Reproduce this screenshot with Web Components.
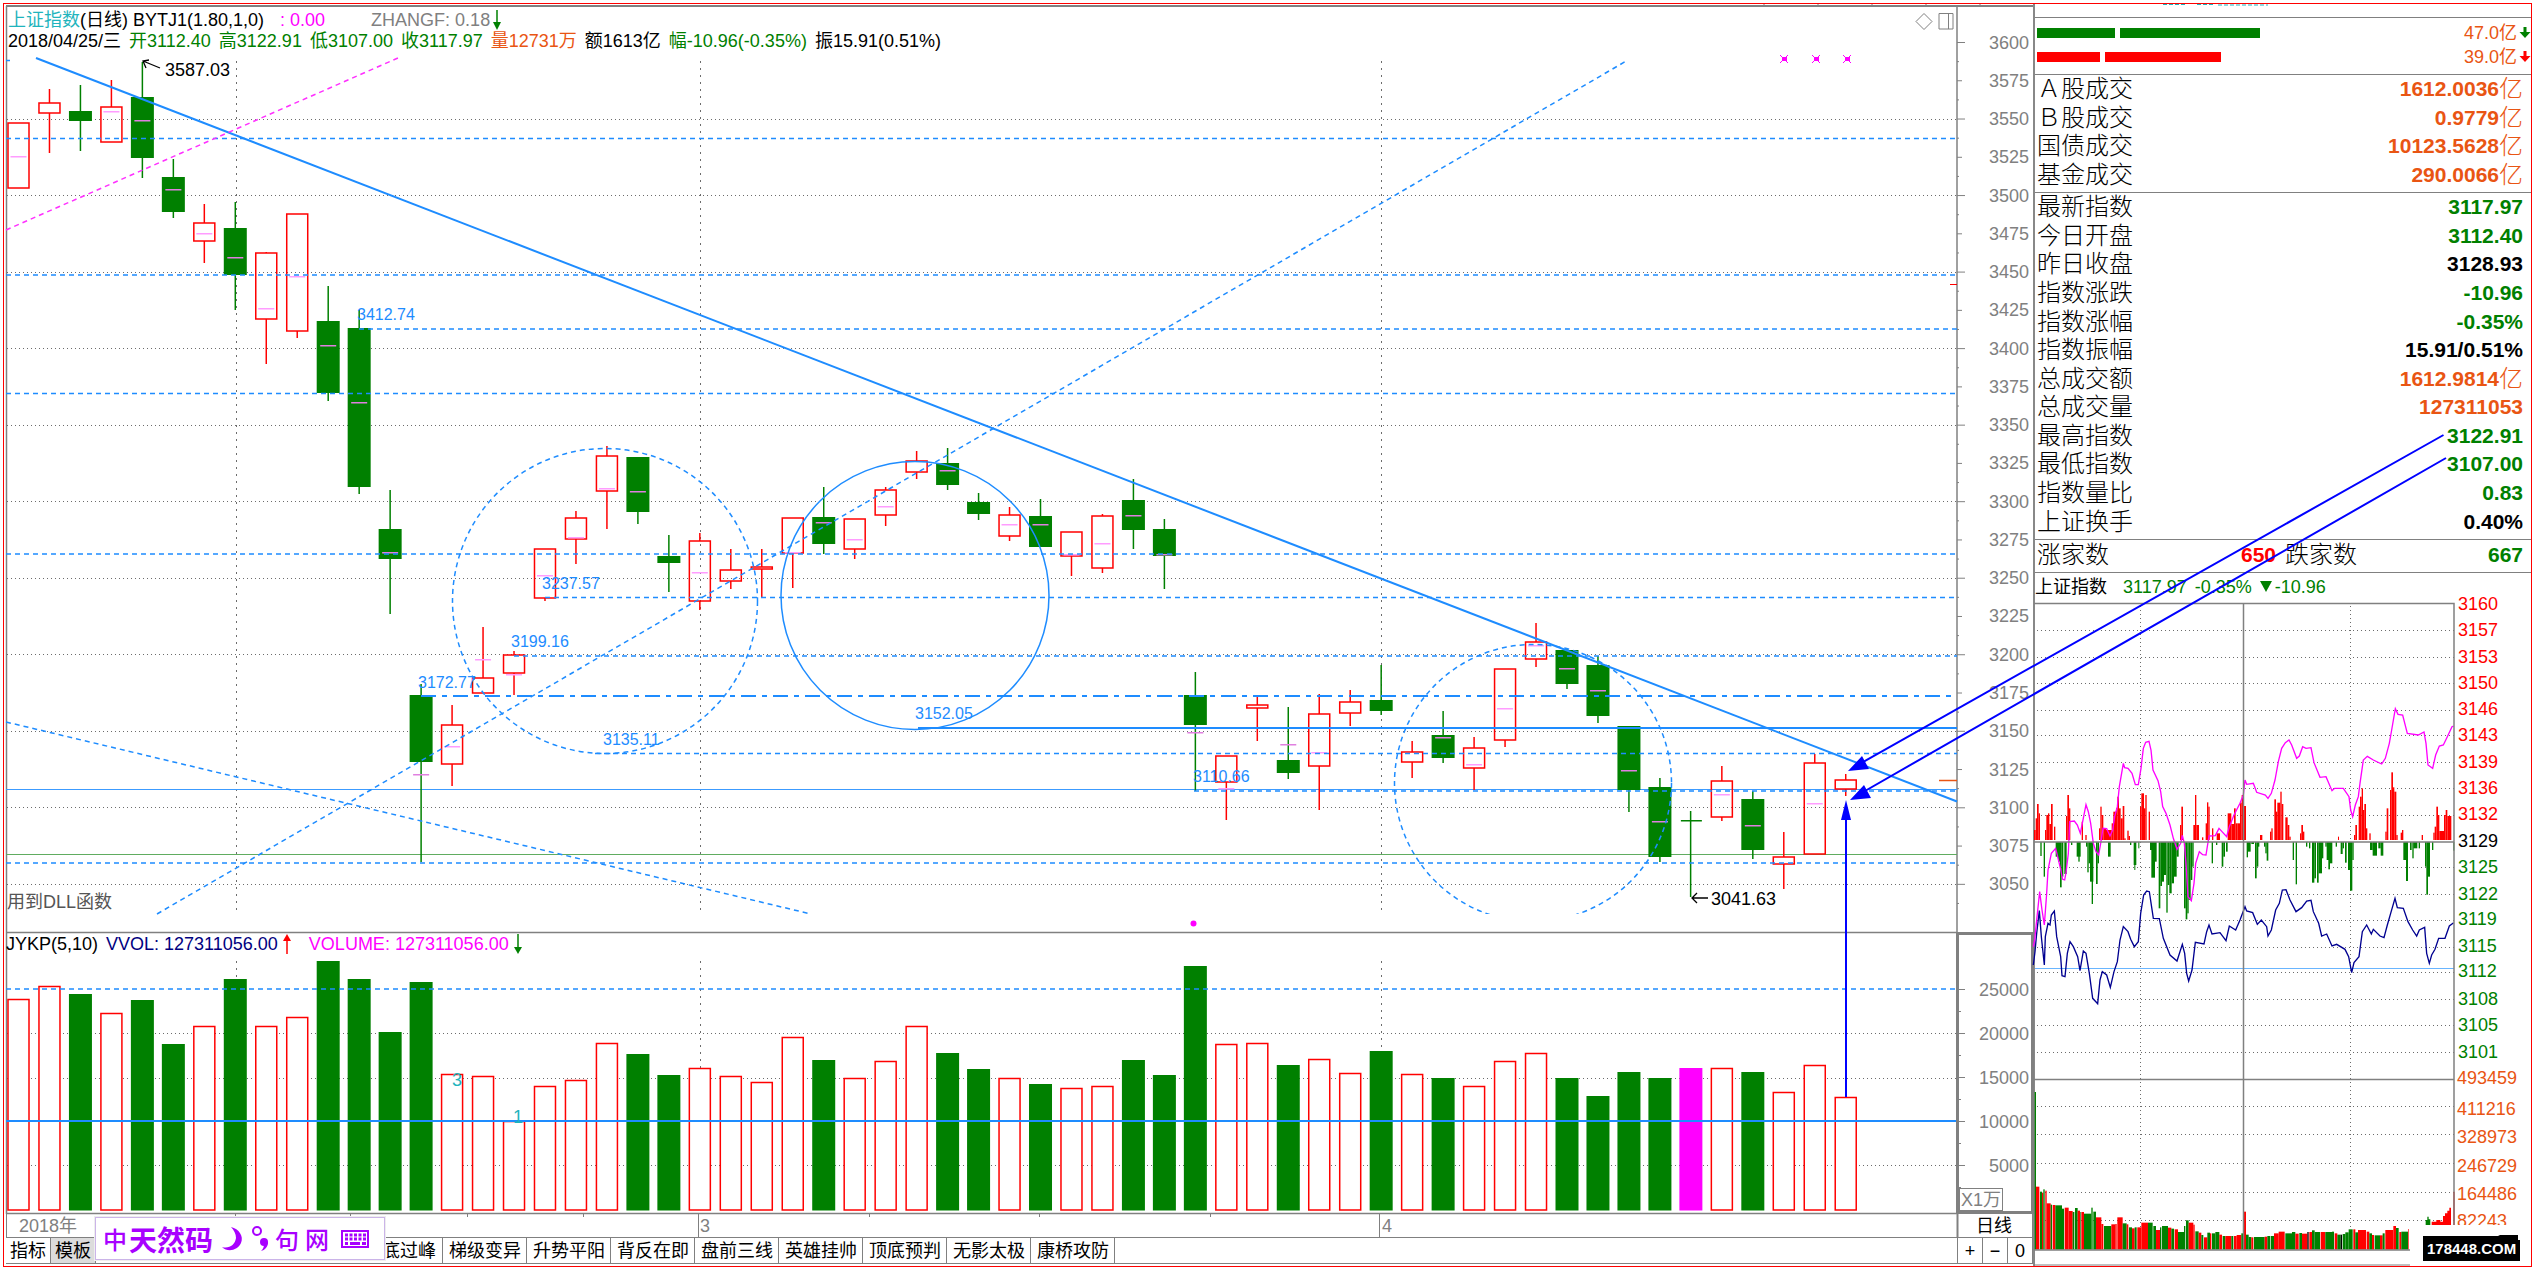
<!DOCTYPE html>
<html lang="zh-CN">
<head>
<meta charset="utf-8">
<title>上证指数(日线)</title>
<style>
  html, body { margin: 0; background: #fff; }
  body { font: 18px/20px "Liberation Sans", "Noto Sans CJK SC", sans-serif; color: #000; }
</style>
</head>
<body>
<market-app></market-app>
<script>
const FONT = '"Liberation Sans","Noto Sans CJK SC",sans-serif';
const BLUE = '#1e8cff', GREEN = '#008000', GRAY = '#808080';
const SVG_CSS = `
  :host{display:block;position:relative}
  svg{display:block;width:100%;height:auto;overflow:visible}
  svg text{font:18px ${FONT};white-space:pre}
  .g{stroke:${GRAY};fill:none}
  .dot{stroke:#6c6c6c;stroke-dasharray:1 3;fill:none;shape-rendering:crispEdges}
  .b{stroke:${BLUE};stroke-width:1.5;fill:none}
  .d{stroke-dasharray:5 4}`;
const line = (x1, y1, x2, y2, cls, extra = '') => `<line x1="${x1}" y1="${y1}" x2="${x2}" y2="${y2}" class="${cls}" ${extra}/>`;
const text = (x, y, s, fill, extra = '') => `<text x="${x}" y="${y}" fill="${fill}" ${extra}>${s}</text>`;
const barX = i => 18.5 + 30.97 * i;
const PLOT_RIGHT = 1957;

function define(name, build) {
  customElements.define(name, class extends HTMLElement {
    connectedCallback() {
      if (this.shadowRoot) return;
      this.attachShadow({ mode: 'open' }).innerHTML = build(this);
    }
  });
}

/* colour, high, body top, body bottom, low, mean mark */
const CANDLES = [
 ['r',123,123,188,188,156],['r',89,103,113,153],['g',85,111,121,151],['r',80,107,142,142,111],['g',62,97,158,178,120],
 ['g',159,177,212,218,189],['r',204,223,241,263,233],['g',202,228,275,310,257],['r',252,253,319,364,308],['r',214,214,331,338,276],
 ['g',286,321,393,401,345],['g',310,328,487,494,402],['g',490,529,559,614,552],['g',684,695,762,862,774],['r',705,725,764,786,746],
 ['r',627,678,693,693,659],['r',651,655,673,695,674],['r',549,549,598,601,575],['r',511,518,539,564,537],['r',446,456,491,529,488],
 ['g',457,457,512,524,491],['g',535,556,563,592],['r',533,541,601,610,572],['r',549,570,581,589],['r',549,567,569,597],
 ['r',518,518,553,588,552],['g',487,517,544,554,522],['r',519,519,549,559,539],['r',487,490,515,526,506],['r',451,461,472,479],
 ['g',448,463,485,490,470],['g',493,502,514,520],['r',507,515,536,541,524],['g',499,516,547,547,524],['r',532,532,556,576,554],
 ['r',514,516,568,573,543],['g',479,500,530,549,515],['g',519,529,556,589,554],['g',672,695,725,791,732],['r',756,756,782,820,788],
 ['r',697,705,708,741],['g',707,760,773,779,744],['r',694,714,766,810,752],['r',690,702,713,726],['g',665,700,711,715],
 ['r',741,752,762,778],['g',711,735,758,763,737],['r',737,748,768,790,764],['r',669,669,740,747,708],['r',623,642,659,667,645],
 ['g',648,650,684,689,668],['g',656,665,716,723,690],['g',726,726,790,812,770],['g',778,787,857,862,821],['g',811,820,822,897],
 ['r',766,781,817,821,794],['g',791,799,850,859,825],['r',832,857,864,889],['r',754,763,854,854,803],['r',774,780,789,796]];
const VOLUMES = [999,986,994,1013,1000,1044,1026,979,1026,1017,961,979,1032,982,1074,1076,1121,1086,1080,1043,1054,1075,1068,1076,1082,1037,1060,1078,1061,1026,
 1053,1069,1078,1084,1088,1086,1060,1075,966,1044,1043,1065,1059,1073,1051,1074,1078,1086,1061,1053,1078,1096,1072,1078,1068,1068,1072,1092,1065,1097];

function candle([c, hi, top, bot, lo, mark], i) {
  const x = barX(i), color = c === 'r' ? '#f00' : GREEN;
  let s = '';
  if (i === 54) s += `<rect x="${x - 10}" y="820" width="21" height="1.5" fill="${color}"/><rect x="${x - 1}" y="${hi}" width="1.5" height="${lo - hi}" fill="${color}"/>`;
  else {
    if (top > hi) s += line(x, hi, x, top, '', `stroke="${color}" stroke-width="1.5"`);
    if (lo > bot) s += line(x, bot, x, lo, '', `stroke="${color}" stroke-width="1.5"`);
    s += c === 'r'
      ? `<rect x="${x - 10.5}" y="${top}" width="21" height="${bot - top}" fill="none" stroke="${color}" stroke-width="1.5"/>`
      : `<rect x="${x - 11.5}" y="${top}" width="23" height="${bot - top}" fill="${color}"/>`;
  }
  if (mark) s += `<rect x="${x - 8}" y="${mark}" width="16" height="1.5" fill="${c === 'r' ? '#ff9cff' : '#e080e0'}"/>`;
  return s;
}

define('price-chart', () => {
  let s = '';
  s += line(6, 6, 2033, 6, 'g', 'stroke-width="2"') + line(PLOT_RIGHT, 6, PLOT_RIGHT, 932, 'g', 'stroke-width="1.5"') + line(6.5, 6, 6.5, 932, 'g', 'stroke-width="1.5"');
  for (let x = 1764; x < 2030; x += 54) s += line(x, 4, x, 6, 'g');
  for (let p = 3550; p >= 3050; p -= 50) { const y = Math.round(42 + (3600 - p) * 1.5306); s += line(7, y + .5, PLOT_RIGHT, y + .5, 'dot'); }
  for (const x of [236, 700, 1381]) s += line(x + .5, 61, x + .5, 912, 'dot', 'style="stroke-dasharray:2 5"');
  for (let k = 0; k < 46; k++) { const y = 42.5 + k * 19.1325; s += line(PLOT_RIGHT, y, PLOT_RIGHT + (k % 4 === 0 ? 8 : k % 2 === 0 ? 5 : 2), y, 'g'); }
  for (let p = 3600; p >= 3050; p -= 25) s += text(2029, Math.round(48.5 + (3600 - p) * 1.5306), p, GRAY, 'text-anchor="end"');
  s += line(6, 789.5, PLOT_RIGHT, 789.5, '', 'stroke="#3c9bff"') + line(6, 854.5, PLOT_RIGHT, 854.5, '', 'stroke="#60ac60"');
  CANDLES.forEach((c, i) => s += candle(c, i));
  for (const [x, y] of [[6, 138.5], [6, 275], [359, 329], [6, 393.5], [6, 554], [545, 597.5], [514, 656], [595, 753.5], [1194, 791], [6, 863]]) s += line(x, y, PLOT_RIGHT, y, 'b d');
  s += line(421, 696, PLOT_RIGHT, 696, 'b', 'style="stroke-width:2;stroke-dasharray:15 6 5 6"') + line(918, 728, PLOT_RIGHT, 728, 'b', 'style="stroke-width:2"');
  s += '<circle cx="605" cy="601" r="152.5" class="b d"/><circle cx="915" cy="595.5" r="134" class="b"/>';
  s += '<clipPath id="c"><rect x="6" y="58" width="1951" height="856"/></clipPath><circle cx="1533" cy="783" r="138.5" class="b d" clip-path="url(#c)"/>';
  s += line(36, 58, PLOT_RIGHT, 801.5, 'b', 'style="stroke-width:2"') + line(157, 914, 1628, 60, 'b d') + line(6, 722, 811, 914, 'b d') + line(6, 60.5, 10, 60.5, 'b');
  s += line(6, 230, 398, 58, 'd', 'stroke="#ff30ff" stroke-width="1.5"');
  for (const [x, y, t] of [[357, 320, '3412.74'], [542, 589, '3237.57'], [511, 647, '3199.16'], [418, 688, '3172.77'], [603, 745, '3135.11'], [915, 719, '3152.05'], [1193, 782, '3110.66']]) s += text(x, y, t, BLUE, 'style="font-size:16px"');
  s += text(165, 76, '3587.03', '#000') + text(1711, 905, '3041.63', '#000') + text(7, 908, '用到DLL函数', '#555');
  s += '<path d="M160 68 L143 61 M149 60 L143 61 L146 68 M1708 898 H1692 M1697 893 L1692 898 L1697 903" stroke="#000" fill="none" stroke-width="1.3"/>';
  for (const x of [1784, 1816, 1847]) s += `<path d="M${x - 4} 55 l8 8 m0 -8 l-8 8" stroke="#f0f"/><rect x="${x - 2}" y="57" width="5" height="4" fill="#f0f"/>`;
  s += '<circle cx="1193.5" cy="923.5" r="3" fill="#f0f"/>';
  s += line(1939, 780.5, PLOT_RIGHT, 780.5, '', 'stroke="#e95513" stroke-width="1.5"') + line(1950, 284.5, PLOT_RIGHT, 284.5, '', 'stroke="#f00"');
  s += '<path d="M1924 13.5 l8 8 -8 8 -8 -8z M1939 13.5 h14 v15.5 h-14z M1948.5 13.5 v15.5" class="g"/>';
  return `<style>${SVG_CSS}
    .head{position:absolute;left:4px;top:6px;white-space:nowrap}
    .row{display:flex;gap:8px;height:21px;line-height:21px}
    .green{color:${GREEN}} .orange{color:#e95513} .gray{color:${GRAY}}
    .row svg{width:8px;height:21px}
    .cyan{color:#1fb4bd} .first{gap:0} .mag{color:#f0f;margin:0 46px 0 16px} .code{margin-left:5px} .gray{margin-right:3px}
  </style>
  <svg viewBox="4 4 2029 928">${s}</svg>
  <div class="head">
    <div class="row first"><span class="cyan">上证指数</span><span>(日线)</span><span class="code">BYTJ1(1.80,1,0)</span><span class="mag">: 0.00</span><span class="gray">ZHANGF: 0.18</span><svg viewBox="0 0 8 21"><path d="M4 0V16" stroke="${GREEN}" stroke-width="1.5"/><path d="M0 12h8L4 20z" fill="${GREEN}"/></svg></div>
    <div class="row"><span>2018/04/25/三</span><span class="green">开3112.40</span><span class="green">高3122.91</span><span class="green">低3107.00</span><span class="green">收3117.97</span><span class="orange">量12731万</span><span>额1613亿</span><span class="green">幅-10.96(-0.35%)</span><span>振15.91(0.51%)</span></div>
  </div>`;
});

define('volume-chart', () => {
  let s = line(6, 932.5, PLOT_RIGHT, 932.5, 'g', 'stroke-width="1.5"') + line(6.5, 932, 6.5, 1214, 'g', 'stroke-width="1.5"') + line(6, 1213.5, PLOT_RIGHT, 1213.5, 'g', 'stroke-width="1.5"');
  for (const y of [1033, 1078, 1165]) s += line(7, y + .5, PLOT_RIGHT, y + .5, 'dot');
  for (const x of [236, 700, 1381]) s += line(x + .5, 961, x + .5, 1210, 'dot', 'style="stroke-dasharray:2 5"');
  VOLUMES.forEach((y, i) => {
    const x = barX(i), c = CANDLES[i][0];
    s += i === 54 || c === 'g'
      ? `<rect x="${x - 11.5}" y="${y}" width="23" height="${1210.5 - y}" fill="${i === 54 ? '#f0f' : GREEN}"/>`
      : `<rect x="${x - 10.5}" y="${y + .5}" width="21" height="${1209.5 - y}" fill="#fff" stroke="#f00" stroke-width="1.5"/>`;
  });
  s += line(6, 989, PLOT_RIGHT, 989, 'b d') + line(6, 1121, PLOT_RIGHT, 1121, 'b', 'style="stroke-width:2"');
  s += '<rect x="1957.5" y="933.5" width="75" height="279" class="g" style="stroke-width:3"/>';
  [[989, '25000'], [1033, '20000'], [1077, '15000'], [1121, '10000'], [1165, '5000']].forEach(([y, t]) => {
    s += line(PLOT_RIGHT, y + .5, PLOT_RIGHT + 8, y + .5, 'g') + line(PLOT_RIGHT, y + 22.5, PLOT_RIGHT + 4, y + 22.5, 'g') + text(2029, y + 7, t, GRAY, 'text-anchor="end"');
  });
  s += '<rect x="1959.5" y="1188.5" width="43" height="22" class="g" style="fill:#fff"/>' + text(1961, 1206, 'X1万', GRAY);
  s += text(452, 1086, '3', '#1fb4bd') + text(513, 1123, '1', '#1fb4bd');
  return `<style>${SVG_CSS}
    .head{position:absolute;left:2px;top:2px;display:flex;height:20px;line-height:20px;white-space:pre}
    .head svg{width:8px;height:20px} .navy{color:#000080;margin:0 5px 0 8px} .mag{color:#f0f;margin:0 5px 0 18px}
  </style>
  <svg viewBox="4 932 2029 282">${s}</svg>
  <div class="head"><span>JYKP(5,10)</span><span class="navy">VVOL: 127311056.00</span><svg viewBox="0 0 8 20"><path d="M4 3V20" stroke="#f00" stroke-width="1.5"/><path d="M0 7h8L4 0z" fill="#f00"/></svg><span class="mag">VOLUME: 127311056.00</span><svg viewBox="0 0 8 20"><path d="M4 0V16" stroke="${GREEN}" stroke-width="1.5"/><path d="M0 13h8L4 20z" fill="${GREEN}"/></svg></div>`;
});

define('time-axis', () => {
  let s = line(6.5, 1214, 6.5, 1238, 'g') + line(1957.5, 1214, 1957.5, 1238, 'g', 'stroke-width="2"') + line(2032.5, 1214, 2032.5, 1238, 'g') + line(6, 1237.5, 2033, 1237.5, 'g');
  for (const x of [235, 350, 467, 583, 869, 1039, 1210]) s += line(x + .5, 1214, x + .5, 1217, 'g');
  for (const x of [698, 1379]) s += line(x + .5, 1214, x + .5, 1237, 'g');
  s += text(19, 1232, '2018年', GRAY) + text(700, 1232, '3', GRAY) + text(1382, 1232, '4', GRAY) + text(1976, 1232, '日线', '#000');
  return `<style>${SVG_CSS}</style><svg viewBox="4 1214 2029 24">${s}</svg>`;
});

define('tab-bar', () => `<style>
    :host{display:flex;height:28px;padding-left:2px;box-sizing:border-box}
    button{font:18px/24px ${FONT};height:26px;padding:0 6px;margin:0;border:0 solid #808080;border-width:0 1px 1px 0;background:#fff;color:#000;white-space:nowrap;box-sizing:border-box;text-align:right}
    .short{width:45px;padding:0 4px} .on{background:#dcdcdc} .tab{width:84px}
    .under{width:263px;height:26px;border-bottom:1px solid #808080;box-sizing:border-box}
    .rest{flex:1;height:26px;border-bottom:1px solid #808080;box-sizing:border-box}
    .zoom{width:25px;padding:0;text-align:center}
    .edge{border-left-width:1px;width:26px}
  </style>
  <button class="short">指标</button><button class="short on">模板</button><span class="under"></span>
  ${['底过峰', '梯级变异', '升势平阳', '背反在即', '盘前三线', '英雄挂帅', '顶底预判', '无影太极', '康桥攻防'].map(t => `<button class="tab">${t}</button>`).join('')}
  <span class="rest"></span><button class="zoom edge">+</button><button class="zoom">−</button><button class="zoom">0</button>`);

define('ime-bar', () => `<style>
    :host{display:flex;align-items:center;gap:6px;width:290px;height:43px;padding-left:7px;box-sizing:border-box;background:#fff;border:1px solid #cbb4e8;outline:1px solid #eee;color:#a800ff;font:24px/30px "Noto Sans CJK SC",sans-serif;white-space:nowrap}
    b{font-size:28px;font-weight:700;margin-left:-4px} svg{display:block}
    span{font-weight:500} .kb{margin-left:5px}
  </style>
  <span>中</span><b>天然码</b>
  <svg width="26" height="30" viewBox="0 0 26 30"><path d="M12 3C20 5 25 12 22 19C19 26 9 29 3 23C10 25 16 21 17 14C17 10 15 6 12 3Z" fill="#a800ff"/></svg>
  <svg width="18" height="30" viewBox="0 0 18 30"><circle cx="6" cy="7" r="4" fill="none" stroke="#a800ff" stroke-width="2"/><circle cx="13" cy="18" r="4" fill="#a800ff"/><path d="M17 18C17 23 14 26 10 27C13 24 13 22 13 18Z" fill="#a800ff"/></svg>
  <span>句</span><span>网</span>
  <svg class="kb" width="30" height="22" viewBox="0 0 30 22"><path d="M2 3h26v16h-26z" fill="#fff" stroke="#a800ff" stroke-width="2"/><path d="M5 7h21M5 11h21" stroke="#a800ff" stroke-width="3" stroke-dasharray="3 1.5"/><path d="M5 15.5h3M10 15.5h10M22 15.5h4" stroke="#a800ff" stroke-width="3"/></svg>`);

define('quote-row', el => {
  const c = { g: GREEN, k: '#000', o: '#e95513', r: '#f00' }[el.getAttribute('tone')];
  return `<style>
    :host{display:flex;justify-content:space-between;align-items:center;flex:1;min-height:0;white-space:nowrap}
    .l{font:24px/28px ${FONT}; font-weight:300}
    b{font:bold 21px/28px ${FONT};color:${c};display:flex;align-items:center}
    i{font:300 24px/28px ${FONT}}
  </style><span class="l"><slot></slot></span><b>${el.getAttribute('value')}${el.hasAttribute('yi') ? '<i>亿</i>' : ''}</b>`;
});

const MAG = '10,800 14,780 20,720 29,635 36,690 43,735 50,640 54,570 64,520 77,505 83,530 90,560 98,598 104,600 108,578 115,520 119,425 133,423 142,435 151,460 158,425 168,374 175,395 182,430 190,490 198,515 206,525 212,490 219,445 230,446 240,468 248,450 254,410 262,380 268,320 280,250 284,263 294,265 306,280 316,314 325,314 333,265 340,205 347,187 357,184 363,210 369,270 384,302 392,335 398,380 408,400 420,435 430,475 441,508 452,490 457,466 463,490 468,550 474,650 484,662 492,610 497,550 508,515 518,524 528,525 537,468 556,467 567,445 576,455 590,470 598,440 612,405 630,370 640,345 645,300 650,313 670,310 680,337 706,345 714,355 724,340 735,300 745,245 755,205 766,188 777,180 785,195 800,235 808,228 818,200 828,205 843,203 852,248 870,292 888,290 906,332 914,325 940,325 957,350 962,390 968,410 976,375 985,350 990,310 1000,240 1012,229 1030,240 1055,252 1066,235 1078,190 1085,150 1096,86 1104,103 1118,105 1132,160 1165,165 1182,156 1188,190 1194,255 1208,265 1217,225 1228,198 1240,195 1252,170 1266,140 1271,138';
const NAVY = '10,855 15,815 20,760 28,692 34,770 43,855 46,770 54,730 60,735 64,705 73,693 80,770 92,830 96,887 105,890 112,820 120,785 130,800 143,830 150,872 160,813 168,820 178,880 188,955 203,971 210,900 217,875 230,885 241,922 252,875 262,845 270,780 280,740 294,755 302,778 313,800 325,785 332,700 341,645 350,633 358,635 370,715 388,716 400,775 420,825 441,843 457,793 464,820 470,880 476,903 486,870 496,787 522,792 530,755 537,735 546,762 570,758 588,782 598,738 617,750 630,720 645,680 650,693 668,698 682,733 694,720 710,740 714,768 724,750 737,690 748,670 757,630 768,629 780,660 798,695 815,683 830,663 843,661 850,695 866,730 875,768 890,762 906,798 920,793 945,808 956,830 965,878 972,848 987,830 997,755 1010,735 1024,762 1030,748 1050,768 1062,773 1072,735 1082,700 1095,655 1102,683 1120,685 1134,725 1148,750 1160,768 1168,750 1184,742 1190,820 1198,850 1205,825 1215,808 1226,775 1245,775 1258,738 1271,728';
const DOWN = [[31,35,528],[41,45,590],[77,84,530],[84,90,545],[90,95,622],[95,100,590],[103,110,582],[123,127,495],[140,152,530],[145,149,545],[168,172,500],[172,176,577],[176,184,550],[180,190,605],[185,189,672],[198,203,612],[203,207,550],[234,242,530],[300,304,495],[311,319,555],[313,316,570],[325,328,505],[360,366,510],[364,375,593],[375,380,545],[386,391,685],[391,396,618],[396,402,605],[402,408,585],[409,413,698],[413,418,615],[418,425,640],[425,432,610],[432,440,590],[440,446,530],[462,467,685],[467,472,718],[472,476,700],[476,482,660],[482,487,600],[487,491,560],[545,549,550],[558,562,495],[575,580,560],[580,585,530],[588,593,515],[650,654,532],[654,662,515],[664,672,492],[675,680,595],[680,685,560],[684,688,500],[702,706,500],[706,710,520],[710,715,542],[788,792,540],[797,801,613],[828,832,500],[837,841,505],[846,853,608],[853,858,595],[861,866,608],[866,876,580],[876,880,535],[886,890,500],[890,897,540],[895,900,568],[900,907,550],[917,921,500],[932,938,522],[938,942,505],[945,950,548],[954,960,570],[960,967,632],[967,971,540],[1020,1028,510],[1028,1041,527],[1045,1052,505],[1052,1060,527],[1120,1128,540],[1128,1134,603],[1140,1145,510],[1147,1151,535],[1150,1162,505],[1166,1170,505],[1185,1189,560],[1189,1194,644],[1194,1200,590],[1206,1210,510],[1270,1273,512]];
const UP = [[12,17,450],[17,21,415],[21,26,372],[26,30,400],[45,49,450],[49,54,405],[54,58,400],[58,63,432],[63,68,372],[72,76,440],[108,112,408],[112,117,345],[117,121,385],[155,159,425],[166,170,465],[207,211,445],[211,215,380],[215,220,405],[220,228,445],[228,245,450],[245,250,430],[250,258,395],[258,262,385],[262,267,350],[267,272,385],[272,278,415],[278,283,378],[283,287,475],[292,296,452],[296,300,468],[330,334,380],[334,342,340],[342,346,385],[346,350,345],[356,360,395],[450,454,435],[454,459,380],[490,495,435],[495,499,345],[499,507,435],[516,520,472],[527,531,430],[531,535,367],[535,539,380],[546,550,445],[560,570,460],[593,597,400],[597,604,400],[604,612,432],[612,617,385],[617,622,430],[622,630,430],[630,635,368],[635,640,345],[640,648,378],[690,697,465],[720,724,455],[724,728,445],[733,738,358],[738,742,395],[742,751,368],[751,755,335],[755,760,372],[766,773,412],[773,778,435],[778,782,470],[810,814,460],[814,819,435],[819,823,455],[924,927,470],[972,976,465],[976,981,435],[986,990,380],[990,995,350],[995,999,325],[999,1003,390],[1003,1008,372],[1008,1012,445],[1018,1022,460],[1066,1070,455],[1070,1075,385],[1080,1084,330],[1084,1089,277],[1089,1093,322],[1093,1099,335],[1099,1103,465],[1112,1116,458],[1116,1120,450],[1175,1179,465],[1210,1214,458],[1214,1219,440],[1219,1224,380],[1224,1228,405],[1228,1242,453],[1242,1247,405],[1247,1252,390],[1252,1264,408]];
/* minute volume: x, top, run colour */
const MINUTE = [[18,140,'r'],[30,155,'g'],[36,158,'r'],[40,148,'g'],[46,152,'r'],[50,190,'r'],[62,194,'g'],[68,195,'r'],[76,196,'g'],[96,206,'g'],[104,203,'r'],[116,213,'r'],[128,216,'g'],[135,204,'g'],[143,212,'r'],[150,216,'g'],[154,216,'r'],[162,221,'g'],[184,203,'g'],[190,215,'g'],[198,232,'r'],[214,252,'r'],[222,258,'g'],[244,253,'r'],[256,252,'r'],[262,232,'r'],[278,250,'g'],[290,253,'r'],[297,262,'g'],[306,265,'r'],[314,262,'g'],[322,262,'r'],[334,248,'r'],[354,248,'g'],[370,258,'g'],[378,270,'r'],[390,262,'g'],[396,258,'g'],[414,263,'r'],[424,266,'g'],[434,268,'r'],[444,276,'g'],[462,258,'g'],[468,241,'g'],[476,248,'r'],[490,254,'r'],[496,274,'g'],[506,278,'r'],[514,285,'g'],[522,292,'r'],[532,278,'g'],[540,280,'r'],[546,280,'g'],[556,276,'g'],[568,284,'r'],[578,288,'g'],[586,288,'r'],[604,288,'g'],[612,288,'r'],[620,285,'r'],[634,280,'g'],[648,284,'g'],[656,291,'g'],[664,292,'r'],[672,291,'g'],[704,290,'r'],[712,288,'g'],[722,288,'g'],[732,280,'r'],[746,275,'r'],[766,280,'g'],[786,276,'g'],[796,281,'r'],[808,279,'g'],[816,281,'r'],[832,276,'k'],[838,276,'r'],[846,271,'g'],[854,276,'g'],[872,276,'r'],[886,276,'g'],[906,275,'g'],[914,280,'r'],[922,284,'g'],[932,284,'k'],[938,282,'g'],[946,277,'g'],[956,268,'g'],[970,268,'r'],[976,277,'g'],[984,270,'r'],[1010,275,'r'],[1018,280,'g'],[1026,285,'r'],[1034,286,'g'],[1050,286,'r'],[1058,280,'g'],[1066,270,'r'],[1090,258,'r'],[1098,264,'g'],[1108,276,'r'],[1114,275,'g'],[1134,267,'r'],[1138,267,'']];

define('intraday-chart', () => {
  let s = '';
  const L = 2035, R = 2454;
  for (const y of [630, 657, 683, 710, 735, 762, 788, 815, 867, 894, 920, 947, 972, 999, 1025, 1052, 1106, 1134, 1163, 1192, 1220]) s += line(L + 2, y + .5, R, y + .5, 'dot');
  for (const x of [2140, 2350]) s += line(x + .5, 606, x + .5, 1250, 'dot');
  s += line(L, 968.5, R, 968.5, '', 'stroke="#69b5ff" stroke-width="1"');
  const col = { r: '#f00', g: GREEN, k: '#000' };
  s += '<g transform="translate(2030 680) scale(.33333)">';
  DOWN.forEach(([a, b, y]) => s += `<rect x="${a}" y="486" width="${b - a}" height="${y - 486}" fill="${GREEN}"/>`);
  UP.forEach(([a, b, y]) => s += `<rect x="${a}" y="${y}" width="${b - a}" height="${480 - y}" fill="#f00"/>`);
  s += `<polyline points="${NAVY}" fill="none" stroke="#000090" stroke-width="4"/><polyline points="${MAG}" fill="none" stroke="#f0f" stroke-width="4"/></g>`;
  s += '<g transform="translate(2030 1140) scale(.33333)">';
  for (let i = 0; i < MINUTE.length - 1; i++) {
    const [a, y, c] = MINUTE[i], b = MINUTE[i + 1][0];
    s += `<rect x="${a}" y="${y}" width="${b - a - (i % 3 === 0 ? 2 : 0)}" height="${329 - y}" fill="${col[c]}"/>`;
  }
  s += `<rect x="14" y="-144" width="4" height="473" fill="${GREEN}"/><rect x="642" y="215" width="6" height="114" fill="#f00"/>`;
  s += `<path d="M1187 240h5v-10h4v8h5v20h-14z" fill="${GREEN}"/><path d="M1205 260v-15h14v-5h12v5h8v-17h6v-8h7v-8h6v-9h5v57z M1270 155h4v105h-4z" fill="#f00"/></g>`;
  s += `<g class="g" style="stroke-width:1.5"><path d="M2034 603.5H2454V1250H2034M2034 842H2454M2034 1079.5H2454M2243.5 603V1250"/></g>`;
  s += line(2034, 1265, 2410, 1265, 'g');
  const P = [['3160', 603], ['3157', 629], ['3153', 656], ['3150', 682], ['3146', 708], ['3143', 734], ['3139', 761], ['3136', 787], ['3132', 813], ['3129', 840], ['3125', 866], ['3122', 893], ['3119', 918], ['3115', 945], ['3112', 970], ['3108', 998], ['3105', 1024], ['3101', 1051]];
  P.forEach(([t, y], i) => s += text(2458, y + 7, t, i < 9 ? '#f00' : i === 9 ? '#000' : GREEN));
  [['493459', 1077], ['411216', 1108], ['328973', 1136], ['246729', 1165], ['164486', 1193], ['82243', 1220]].forEach(([t, y]) => s += text(2457, y + 7, t, '#e95513'));
  s += '<rect x="2410" y="1225" width="121" height="40" fill="#fff"/><path d="M2423 1236h75l2 -1h18v5h2v21h-97z" fill="#000"/>' +
       text(2427, 1254, '178448.COM', '#fff', 'style="font:bold 15px \'Liberation Sans\',sans-serif"');
  return `<style>${SVG_CSS}</style><svg viewBox="2035 600 496 666">${s}</svg>`;
});

define('quote-panel', () => `<style>
    :host{display:block;border-left:2px solid #888;box-sizing:border-box}
    section{border-bottom:1px solid #808080;box-sizing:border-box;padding:0 8px 0 2px;display:flex;flex-direction:column}
    .top{height:14px;display:block} .top svg{display:block;margin-left:126px}
    .flow{height:57px;padding:3px 0 5px 2px}
    .bar{display:flex;align-items:center;gap:5px;flex:1}
    .bar i{height:10px;background:var(--c)} .bar span{margin-left:auto;color:#e95513} .bar svg{margin-left:-3px}
    .a{height:118px;padding-bottom:3px} .q{height:347px;padding-bottom:3px}
    .c{height:33px;flex-direction:row;gap:9px;padding-bottom:2px} .c quote-row:first-child{flex:0 0 239px}
    .t{display:flex;align-items:center;height:27px;gap:8px;color:${GREEN};white-space:pre} .t b{font-weight:400;color:#000;margin-right:8px}
    .t .gap0{display:flex;align-items:center;gap:3px}
  </style>
  <section class="top"><svg width="110" height="2"><path d="M0 .5h24M34 .5h18M55 1h50" stroke="#1fb4bd" stroke-dasharray="4 2"/></svg></section>
  <section class="flow">
    <div class="bar" style="--c:${GREEN}"><i style="width:78px"></i><i style="width:140px"></i><span>47.0亿</span><svg width="12" height="14"><path d="M4.5 1h3v5h4L6 12 .5 6h4z" fill="${GREEN}"/></svg></div>
    <div class="bar" style="--c:#f00"><i style="width:63px"></i><i style="width:116px"></i><span>39.0亿</span><svg width="12" height="14"><path d="M4.5 1h3v5h4L6 12 .5 6h4z" fill="#f00"/></svg></div>
  </section>
  <section class="a">
    <quote-row value="1612.0036" tone="o" yi>Ａ股成交</quote-row><quote-row value="0.9779" tone="o" yi>Ｂ股成交</quote-row>
    <quote-row value="10123.5628" tone="o" yi>国债成交</quote-row><quote-row value="290.0066" tone="o" yi>基金成交</quote-row>
  </section>
  <section class="q">
    <quote-row value="3117.97" tone="g">最新指数</quote-row><quote-row value="3112.40" tone="g">今日开盘</quote-row>
    <quote-row value="3128.93" tone="k">昨日收盘</quote-row><quote-row value="-10.96" tone="g">指数涨跌</quote-row>
    <quote-row value="-0.35%" tone="g">指数涨幅</quote-row><quote-row value="15.91/0.51%" tone="k">指数振幅</quote-row>
    <quote-row value="1612.9814" tone="o" yi>总成交额</quote-row><quote-row value="127311053" tone="o">总成交量</quote-row>
    <quote-row value="3122.91" tone="g">最高指数</quote-row><quote-row value="3107.00" tone="g">最低指数</quote-row>
    <quote-row value="0.83" tone="g">指数量比</quote-row><quote-row value="0.40%" tone="k">上证换手</quote-row>
  </section>
  <section class="c"><quote-row value="650" tone="r">涨家数</quote-row><quote-row value="667" tone="g">跌家数</quote-row></section>
  <div class="t"><b>上证指数</b><span>3117.97</span><span>-0.35%</span><span class="gap0"><svg width="12" height="11"><path d="M0 0h12L6 11z" fill="${GREEN}"/></svg>-10.96</span></div>
  <intraday-chart></intraday-chart>`);

define('arrow-layer', () => `<style>:host{position:absolute;inset:0;pointer-events:none} svg{display:block;width:100%;height:auto}</style>
  <svg viewBox="4 4 2527 1262"><g stroke="#00f" stroke-width="2" fill="none"><path d="M2443.5 435L1856 766M2446 458L1858 795M1846 1097V815"/></g>
  <g fill="#00f"><path d="M1848 771L1862 756 1869 769zM1850 800L1864 785 1871 798zM1846 800L1851 820H1841z"/></g></svg>`);

define('market-app', () => `<style>
    :host{display:block;position:relative;margin:3px 4px 4px 3px;border:1px solid #f00}
    .cols{display:grid;grid-template-columns:minmax(0,1fr) 498px}
    main{position:relative;min-width:0}
    ime-bar{position:absolute;left:91px;bottom:6px}
  </style>
  <div class="cols"><main><price-chart></price-chart><volume-chart></volume-chart><time-axis></time-axis><tab-bar></tab-bar><ime-bar></ime-bar></main><quote-panel></quote-panel></div>
  <arrow-layer></arrow-layer>`);
</script>
</body>
</html>
